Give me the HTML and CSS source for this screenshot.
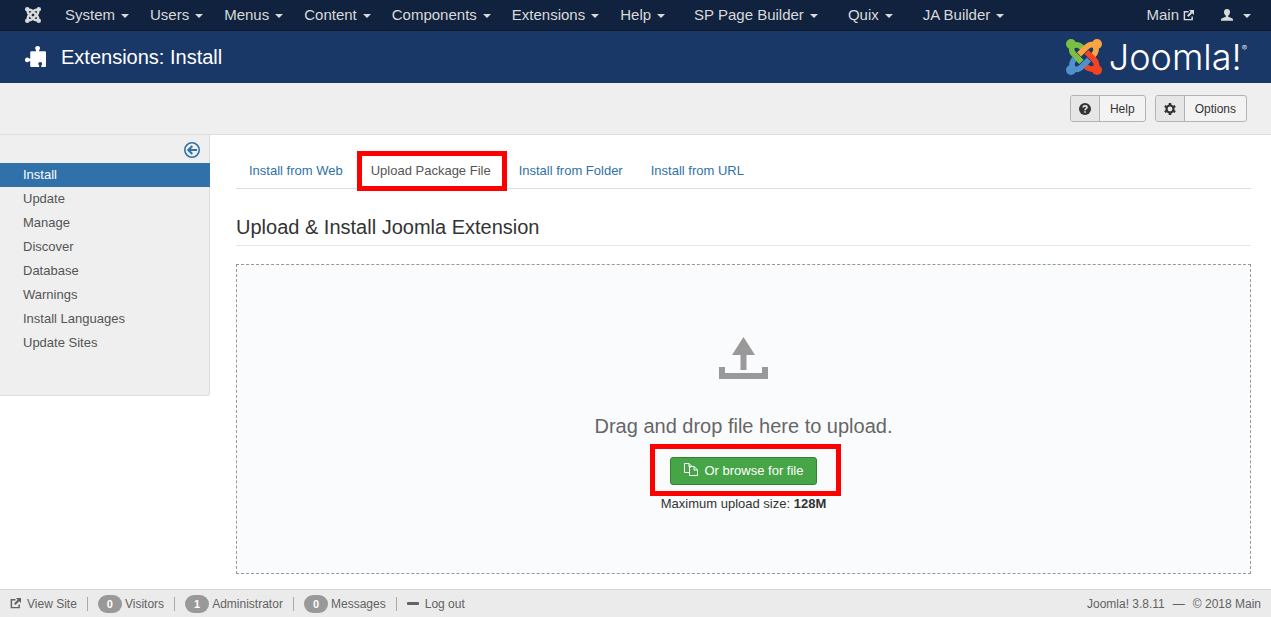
FILE: index.html
```html
<!DOCTYPE html>
<html lang="en">
<head>
<meta charset="utf-8">
<meta name="viewport" content="width=device-width, initial-scale=1">
<title>Extensions: Install</title>
<link rel="stylesheet" href="styles.css">
</head>
<body>
<svg class="defs" aria-hidden="true">
  <symbol id="ext" viewBox="0 0 12 12"><path d="M6 2H1.500v8.500H10V7" fill="none" stroke="currentColor" stroke-width="1.600"/><path d="M6.500 0H12v5.500L10 3.600 6 7.600 4.400 6l4-4z" fill="currentColor"/></symbol>
  <symbol id="arm" viewBox="0 0 36 36"><circle cx="5" cy="5" r="5" fill="currentColor"/><path d="M7 6.500C5 12 7 14.500 10 17.500L19.500 27M7 7C12.500 5 15 7 17.500 9.500" fill="none" stroke="currentColor" stroke-width="5.500"/></symbol>
</svg>
<nav class="topbar" aria-label="Main menu">
  <a class="brand" href="#" aria-label="Joomla"><svg viewBox="0 0 36 36" width="16" height="16"><use href="#arm"/><use href="#arm" transform="rotate(90 18 18)"/><use href="#arm" transform="rotate(180 18 18)"/><use href="#arm" transform="rotate(270 18 18)"/></svg></a>
  <ul class="menu">
    <li><a class="drop" href="#">System</a></li>
    <li><a class="drop" href="#">Users</a></li>
    <li><a class="drop" href="#">Menus</a></li>
    <li><a class="drop" href="#">Content</a></li>
    <li><a class="drop" href="#">Components</a></li>
    <li><a class="drop" href="#">Extensions</a></li>
    <li><a class="drop" href="#">Help</a></li>
  </ul>
  <ul class="menu menu-extra">
    <li><a class="drop" href="#">SP Page Builder</a></li>
    <li><a class="drop" href="#">Quix</a></li>
    <li><a class="drop" href="#">JA Builder</a></li>
  </ul>
  <div class="account">
    <a class="site" href="#">Main <svg width="11" height="11"><use href="#ext"/></svg></a>
    <a class="drop user" href="#" aria-label="User menu"><svg viewBox="0 0 12 12" width="12" height="12"><path d="M6 0C7.900 0 9 1.300 9 3.100 9 4.800 8.200 6 7.200 6.700v1.100L11 9.300c.7.300 1 .8 1 1.700v.8H0V11c0-.9.300-1.400 1-1.700l3.800-1.500V6.700C3.800 6 3 4.800 3 3.100 3 1.300 4.100 0 6 0z" fill="currentColor"/></svg></a>
  </div>
</nav>
<header class="header">
  <svg class="puzzle" viewBox="0 0 20 20" width="21" height="21"><path d="M5 6q0-1 1-1h4.500V3.800C9.800 3.300 9.700 2.700 9.700 2c0-1.200 1-2 2.300-2s2.300.8 2.300 2c0 .7-.1 1.300-.8 1.800V5H19q1 0 1 1v13q0 1-1 1h-3.500v-1.500c.6-.4.800-.9.800-1.500 0-1-.8-1.700-1.800-1.700s-1.800.7-1.800 1.700c0 .6.200 1.100.8 1.500V20H6q-1 0-1-1v-4.500H3.800C3.400 15.200 2.800 15.500 2 15.500c-1.200 0-2-1-2-2.200S.8 11 2 11c.8 0 1.400.3 1.800 1H5z" fill="#fff"/></svg>
  <h1>Extensions: Install</h1>
  <div class="logo">
    <svg viewBox="0 0 36 36" width="36" height="36" aria-hidden="true">
      <g fill="none" stroke-width="5.800">
        <g stroke="#7ac143"><circle cx="5" cy="5" r="5" fill="#7ac143" stroke="none"/><path d="M6.200 7C4.500 12 6.500 14 9.500 17L15 22.500M7 6.500C12 5 14 6.500 16.500 9"/></g>
        <g stroke="#f9a541"><circle cx="31" cy="5" r="5" fill="#f9a541" stroke="none"/><path d="M29 6.200C24 4.500 22 6.500 19 9.500L13 15.500M29.500 7C31 12 29.500 14 27 16.500"/></g>
        <g stroke="#f44321"><circle cx="31" cy="31" r="5" fill="#f44321" stroke="none"/><path d="M29.800 29C31.500 24 29.500 22 26.500 19L20.500 13M29 29.500C24 31 22 29.500 19.500 27"/></g>
        <g stroke="#5091cd"><circle cx="5" cy="31" r="5" fill="#5091cd" stroke="none"/><path d="M7 29.800C12 31.500 14 29.500 17 26.500L23 20.500M6.500 29C5 24 6.500 22 9 19.500"/></g>
        <path d="M10 17.500L15.500 23" stroke="#7ac143"/>
      </g>
    </svg>
    <span class="wordmark">Joomla!<sup>®</sup></span>
  </div>
</header>
<div class="toolbar">
  <button class="tool" type="button"><span class="tool-icon"><svg viewBox="0 0 12 12" width="12" height="12"><circle cx="6" cy="6" r="6" fill="#333"/><path d="M4 4.500C4.200 2.300 8 2.300 8 4.500 8 5.800 6 5.600 6 7.200M6 8.200v1.600" fill="none" stroke="#e6e6e6" stroke-width="1.600"/></svg></span><span class="tool-text">Help</span></button>
  <button class="tool" type="button"><span class="tool-icon"><svg viewBox="0 0 12 12" width="12" height="12"><g fill="none" stroke="#333"><circle cx="6" cy="6" r="3.500" stroke-width="2.200"/><path d="M6 0v2M6 10v2M.8 3l1.700 1M9.500 8l1.700 1M.8 9l1.700-1M9.500 4l1.700-1" stroke-width="2.600"/></g></svg></span><span class="tool-text">Options</span></button>
</div>
<div class="content">
  <aside class="sidebar">
    <button class="collapse" type="button" aria-label="Hide sidebar"><svg viewBox="0 0 16 16" width="16" height="16"><g fill="none" stroke="#3071a9"><circle cx="8" cy="8" r="7.200" stroke-width="1.600"/><path d="M13 8H4.500M8.300 4L4.300 8l4 4" stroke-width="2"/></g></svg></button>
    <ul>
      <li><a class="current" href="#">Install</a></li>
      <li><a href="#">Update</a></li>
      <li><a href="#">Manage</a></li>
      <li><a href="#">Discover</a></li>
      <li><a href="#">Database</a></li>
      <li><a href="#">Warnings</a></li>
      <li><a href="#">Install Languages</a></li>
      <li><a href="#">Update Sites</a></li>
    </ul>
  </aside>
  <main class="main">
    <ul class="tabs">
      <li><a href="#">Install from Web</a></li>
      <li><a class="active" href="#">Upload Package File</a></li>
      <li><a href="#">Install from Folder</a></li>
      <li><a href="#">Install from URL</a></li>
    </ul>
    <h2>Upload &amp; Install Joomla Extension</h2>
    <section class="dropzone">
      <svg class="upload" viewBox="0 0 49 42" width="49" height="42"><path d="M24.500 0L36 18h-8.500v15h-6V18H13zM0 30h6v6h37v-6h6v12H0z" fill="#999"/></svg>
      <p class="lead">Drag and drop file here to upload.</p>
      <div class="browse-frame"><button class="browse" type="button"><svg viewBox="0 0 14 13" width="14" height="13"><path d="M5 9.500H.5v-9H5L8 3.500M5 .5V4h2M5.500 3.500H10l3.500 3.300v5.700h-8zM10 3.500V7h3.500" fill="none" stroke="#fff"/></svg>Or browse for file</button></div>
      <p class="limit">Maximum upload size: <strong>128M</strong></p>
    </section>
  </main>
</div>
<footer class="status">
  <ul>
    <li><a href="#"><svg width="11" height="11"><use href="#ext"/></svg>View Site</a></li>
    <li><span class="badge">0</span>Visitors</li>
    <li><span class="badge">1</span>Administrator</li>
    <li><span class="badge">0</span>Messages</li>
    <li><a href="#"><svg width="12" height="3"><rect width="12" height="3" rx="1" fill="currentColor"/></svg>Log out</a></li>
  </ul>
  <p><span>Joomla! 3.8.11</span><span>—</span><span>© 2018 Main</span></p>
</footer>
</body>
</html>
```
FILE: styles.css
```css
* { box-sizing: border-box; }
body {
  margin: 0;
  min-height: 100vh;
  display: flex;
  flex-direction: column;
  background: #fff;
  color: #333;
  font: 13px/18px "Liberation Sans", Arial, sans-serif;
}
ul, p, h1, h2 { margin: 0; padding: 0; font-weight: normal; }
ul { list-style: none; }
a { color: #3071a9; text-decoration: none; }
button { font: inherit; color: inherit; cursor: pointer; }
svg { display: block; flex: none; }
.defs { position: absolute; width: 0; height: 0; }

.topbar {
  display: flex;
  align-items: center;
  height: 31px;
  padding: 0 20px 0 25px;
  background: #10223e;
  border-bottom: 1px solid #0c192e;
  font-size: 15px;
  line-height: 30px;
}
.topbar a { color: #d9d9d9; white-space: nowrap; }
.brand { margin-right: 24px; }
.menu { display: flex; gap: 21px; }
.menu-extra { gap: 30px; margin-left: 29px; }
.drop { display: flex; align-items: center; gap: 5px; }
.menu .drop { gap: 6px; }
.drop::after {
  content: "";
  margin-top: 2px;
  border: 4px solid transparent;
  border-top-color: currentColor;
  border-bottom: 0;
}
.account { display: flex; gap: 27px; margin-left: auto; }
.site { display: flex; align-items: center; gap: 4px; }
.account .user { gap: 10px; }

.header {
  display: flex;
  align-items: center;
  height: 52px;
  padding: 0 24px 0 25px;
  background: #1a3867;
  color: #fff;
}
.puzzle { margin-bottom: 2px; }
.header h1 { margin-left: 15px; font-size: 20px; line-height: 24px; }
.logo { display: flex; align-items: center; gap: 7px; margin-left: auto; }
.wordmark {
  display: flex;
  font: 300 36px/36px Inter, sans-serif;
}
.wordmark sup { font-size: 8px; line-height: 18px; }

.toolbar {
  display: flex;
  justify-content: flex-end;
  gap: 9px;
  padding: 12px 24px;
  background: #efefef;
  border-bottom: 1px solid #dedede;
}
.tool {
  display: flex;
  padding: 0;
  overflow: hidden;
  background: #f3f3f3;
  border: 1px solid #b3b3b3;
  border-radius: 3px;
  font-size: 12px;
  line-height: 25px;
}
.tool-icon {
  display: flex;
  align-items: center;
  padding: 0 8px;
  background: #e6e6e6;
  border-right: 1px solid #b3b3b3;
}
.tool-text { padding: 1px 10px 0; line-height: 24px; }

.content { display: flex; flex: 1; align-items: flex-start; }
.sidebar {
  flex: none;
  width: 210px;
  padding-bottom: 40px;
  background: #efefef;
  border: solid #dedede;
  border-width: 0 1px 1px 0;
  border-radius: 0 0 3px 0;
}
.collapse {
  display: block;
  margin-left: auto;
  padding: 7px 9px 5px;
  background: none;
  border: 0;
}
.sidebar a { display: block; padding: 3px 23px; color: #555; }
.sidebar .current { margin-right: -1px; background: #3071a9; color: #fff; }

.main { flex: 1; padding: 17px 20px 15px 26px; }
.tabs { display: flex; gap: 2px; border-bottom: 1px solid #ddd; }
.tabs a { display: block; position: relative; padding: 10px 13px 8px; }
.tabs .active { color: #555; }
.tabs .active::after {
  content: "";
  position: absolute;
  inset: -1px -3px -3px -1px;
  border: 5px solid #f00;
}
.main h2 {
  margin: 26px 0 18px;
  padding-bottom: 6px;
  border-bottom: 1px solid #e5e5e5;
  font-size: 20px;
  line-height: 24px;
}
.dropzone {
  display: flex;
  flex-direction: column;
  align-items: center;
  min-height: 310px;
  padding: 72px 20px 60px;
  background: #fafbfc;
  border: 1px dashed #999;
}
.lead { margin: 35px 0 19px; color: #666; font-size: 20px; line-height: 24px; }
.browse-frame { position: relative; }
.browse-frame::after {
  content: "";
  position: absolute;
  inset: -13px -24px -11px -20px;
  border: 5px solid #f00;
  pointer-events: none;
}
.browse {
  display: flex;
  gap: 7px;
  padding: 4px 13px;
  background: #46a546;
  border: 1px solid #378137;
  border-radius: 3px;
  color: #fff;
}
.browse svg { margin-top: 1px; }
.limit { margin-top: 10px; }

.status {
  display: flex;
  align-items: center;
  justify-content: space-between;
  height: 28px;
  padding: 0 10px;
  background: #ebebeb;
  border-top: 1px solid #d4d4d4;
  color: #626262;
  font-size: 12px;
}
.status ul, .status p, .status li, .status a { display: flex; align-items: center; }
.status a { gap: 6px; color: #626262; }
.status li + li::before {
  content: "";
  width: 1px;
  height: 14px;
  margin: 0 10px;
  background: #aaa;
}
.status p { gap: 8px; }
.badge {
  margin-right: 3px;
  padding: 0 9px;
  background: #999;
  border-radius: 9px;
  color: #fff;
  font-size: 11px;
  font-weight: bold;
}
```
